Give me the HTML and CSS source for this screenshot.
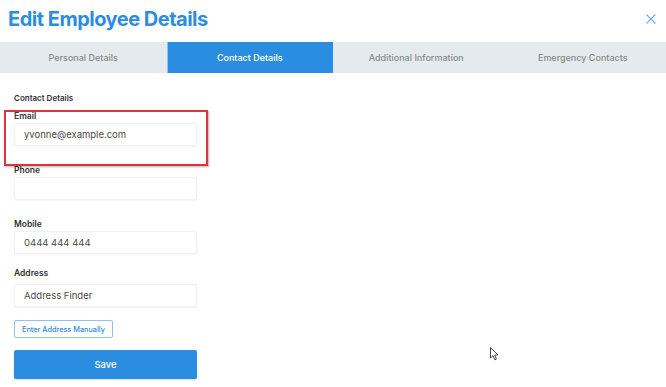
FILE: index.html
```html
<!DOCTYPE html>
<html lang="en">
<head>
    <meta charset="UTF-8">
    <title>Edit Employee Details</title>
    <link rel="stylesheet" href="styles.css">
</head>
<body>
    <div class="modal">
        <div class="modal-header">
            <h1>Edit Employee Details</h1>
            <button class="close-btn" aria-label="Close">
                <svg width="10" height="10" viewBox="0 0 10 10"><path d="M0.5 0.5 L9.5 9.5 M9.5 0.5 L0.5 9.5" stroke="#6cb0ea" stroke-width="1.1" fill="none"/></svg>
            </button>
        </div>

        <div class="tabs">
            <div class="tab">Personal Details</div>
            <div class="tab active">Contact Details</div>
            <div class="tab">Additional Information</div>
            <div class="tab">Emergency Contacts</div>
        </div>

        <form class="form">
            <h2 class="section-title">Contact Details</h2>

            <div class="field">
                <label>Email</label>
                <div class="input">yvonne@example.com</div>
            </div>
            <div class="field">
                <label>Phone</label>
                <div class="input"></div>
            </div>
            <div class="field field-tight">
                <label>Mobile</label>
                <div class="input">0444 444 444</div>
            </div>
            <div class="field field-address">
                <label>Address</label>
                <div class="input">Address Finder</div>
            </div>

            <button type="button" class="btn-outline">Enter Address Manually</button>
            <button type="button" class="btn-save">Save</button>

            <!-- review highlight round the email field -->
            <div class="highlight"></div>
        </form>

        <svg class="cursor" width="10" height="15" viewBox="0 0 10 15">
            <path d="M0.5 0.5 L0.5 11 L3 8.6 L4.8 12.8 L6.4 12.1 L4.7 8 L8 8 Z" fill="#fff" stroke="#333" stroke-width="0.9" stroke-linejoin="round"/>
        </svg>
    </div>
</body>
</html>
```

FILE: styles.css
```css
body {
    margin: 0;
    background: #fff;
    font-family: 'Inter', 'Noto Sans', sans-serif;
    color: #333;
}
.modal {
    position: relative;
    width: 666px;
    height: 387px;
    overflow: hidden;
}
.modal-header {
    display: flex;
    justify-content: space-between;
    align-items: center;
    height: 42px;
    padding: 0 10px 0 8px;
    box-sizing: border-box;
}
h1 {
    margin: 0;
    margin-top: -4px;
    font-size: 20px;
    font-weight: 700;
    color: #2c8de0;
    letter-spacing: -0.5px;
}
.close-btn {
    border: none;
    background: none;
    padding: 0;
    margin-top: -4px;
    line-height: 0;
    cursor: pointer;
}
.tabs {
    display: grid;
    grid-template-columns: repeat(4, 1fr);
    height: 31px;
    background-color: #e4eaed;
}
.tab {
    display: flex;
    align-items: center;
    justify-content: center;
    font-size: 9px;
    font-weight: 500;
    color: #8a8a8a;
}
.tab.active {
    background-color: #2b8de0;
    color: #fff;
    box-shadow: inset 1px 0 0 #8ec3ee;
}
.form {
    position: relative;
    padding: 19px 14px 0 14px;
}
.section-title {
    margin: 0 0 6px 0;
    font-size: 8px;
    line-height: 12px;
    font-weight: 600;
    color: #333;
}
.field {
    width: 183px;
    margin-bottom: 18px;
}
.field-tight {
    margin-bottom: 13px;
}
.field label {
    display: block;
    font-size: 8.5px;
    line-height: 12px;
    font-weight: 600;
    color: #333;
    margin-bottom: 1px;
}
.field-address label {
    margin-bottom: 5px;
}
.input {
    height: 23px;
    box-sizing: border-box;
    padding: 0 9px;
    display: flex;
    align-items: center;
    font-size: 9.5px;
    color: #4a4a4a;
    border: 1px solid #f1f1f1;
    border-radius: 2px;
    box-shadow: 0 1px 2px rgba(0, 0, 0, 0.05);
}
.field-address {
    margin-bottom: 13px;
}
.btn-outline {
    display: block;
    width: 99px;
    height: 18px;
    padding: 0;
    background: #fff;
    border: 1px solid #8fc2ee;
    border-radius: 2px;
    color: #2c8de0;
    font-family: inherit;
    font-size: 7.3px;
    font-weight: 500;
    cursor: pointer;
}
.btn-save {
    display: block;
    margin-top: 12px;
    width: 183px;
    height: 29px;
    padding: 0;
    background-color: #2b8de0;
    border: none;
    border-radius: 2px;
    color: #fff;
    font-family: inherit;
    font-size: 9.5px;
    font-weight: 500;
    box-shadow: 0 1px 2px rgba(0, 0, 0, 0.15);
    cursor: pointer;
}
.highlight {
    position: absolute;
    left: 4px;
    top: 37px;
    width: 204px;
    height: 56px;
    box-sizing: border-box;
    border: 2px solid #d9363e;
    box-shadow: 1px 1px 2px rgba(0, 0, 0, 0.3);
    pointer-events: none;
}
.cursor {
    position: absolute;
    left: 490px;
    top: 347px;
}
```
